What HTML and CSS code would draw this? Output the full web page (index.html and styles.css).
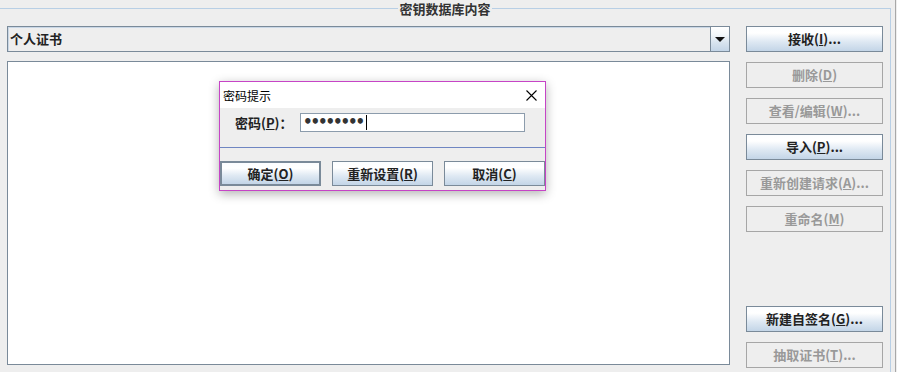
FILE: index.html
```html
<!DOCTYPE html>
<html lang="zh-CN">
<head>
  <meta charset="UTF-8" />
  <title>密钥数据库内容</title>
  <link rel="stylesheet" href="styles.css">
</head>
<body>
  <div class="frame">
    <fieldset class="group">
      <legend>密钥数据库内容</legend>
      <div class="content">
        <div class="main">
          <div class="combo">
            <span class="combo-text">个人证书</span>
            <span class="combo-arrow"><span class="tri"></span></span>
          </div>
          <div class="list"></div>
        </div>
        <div class="actions">
          <button class="btn">接收(<u>I</u>)...</button>
          <button class="btn" disabled>删除(<u>D</u>)</button>
          <button class="btn" disabled>查看/编辑(<u>W</u>)...</button>
          <button class="btn">导入(<u>P</u>)...</button>
          <button class="btn" disabled>重新创建请求(<u>A</u>)...</button>
          <button class="btn" disabled>重命名(<u>M</u>)</button>
          <button class="btn push-down">新建自签名(<u>G</u>)...</button>
          <button class="btn" disabled>抽取证书(<u>T</u>)...</button>
        </div>
      </div>
    </fieldset>

    <div class="dialog">
      <div class="dlg-title">
        <span>密码提示</span>
        <svg class="close" width="11" height="11" viewBox="0 0 11 11">
          <path d="M0.5 0.5 L10.5 10.5 M10.5 0.5 L0.5 10.5" stroke="#000" stroke-width="1.1" fill="none"/>
        </svg>
      </div>
      <div class="dlg-body">
        <div class="pw-row">
          <label class="pw-label">密码(<u>P</u>)：</label>
          <div class="field"><span class="dots">••••••••</span><span class="caret"></span></div>
        </div>
      </div>
      <div class="separator"></div>
      <div class="dlg-buttons">
        <button class="btn default">确定(<u>O</u>)</button>
        <button class="btn">重新设置(<u>R</u>)</button>
        <button class="btn">取消(<u>C</u>)</button>
      </div>
    </div>
  </div>
</body>
</html>
```

FILE: styles.css
```css
body {
  margin: 0;
  background-color: #eeeeee;
  font-family: "Noto Sans CJK SC", "DejaVu Sans", sans-serif;
  font-size: 13px;
  color: #222;
  overflow: hidden;
}

.frame {
  position: relative;
  width: 895px;
  height: 372px;
  border-right: 1px solid #a8a8a8;
  overflow: hidden;
}

.group {
  margin: 0;
  padding: 9px 7px 0 7px;
  width: 891px;
  height: 372px;
  box-sizing: border-box;
  border: 1px solid #b8cfe5;
  border-left: none;
  border-bottom: none;
  min-width: 0;
}

.group legend {
  margin: 0 auto;
  padding: 0 1px;
  font-weight: bold;
  font-size: 13px;
  line-height: 17px;
  color: #333;
}

.content {
  display: flex;
  gap: 16px;
  height: 342px;
}

.main {
  width: 723px;
  display: flex;
  flex-direction: column;
  gap: 9px;
}

.combo {
  height: 26px;
  box-sizing: border-box;
  border: 1px solid #7a8a99;
  display: flex;
  box-shadow: inset 1px 1px 0 #c9d7e6;
}

.combo-text {
  flex: 1;
  padding-left: 2px;
  line-height: 24px;
  font-weight: bold;
  color: #222;
}

.combo-arrow {
  width: 18px;
  border-left: 1px solid #7a8a99;
  background: linear-gradient(#ffffff 0%, #f4f8fb 30%, #d8e4ef 65%, #c3d5e7 100%);
  display: flex;
  align-items: center;
  justify-content: center;
}

.tri {
  width: 0;
  height: 0;
  border-left: 5px solid transparent;
  border-right: 5px solid transparent;
  border-top: 5px solid #111;
}

.list {
  height: 304px;
  box-sizing: border-box;
  background-color: #ffffff;
  border: 1px solid #7a8a99;
}

.actions {
  width: 137px;
  display: flex;
  flex-direction: column;
  gap: 10px;
}

.btn {
  height: 26px;
  box-sizing: border-box;
  padding: 0;
  border: 1px solid #7a8a99;
  background: linear-gradient(#fbfdff 0%, #ffffff 25%, #dfe9f3 60%, #c3d5e7 100%);
  font-family: "Noto Sans CJK SC", "DejaVu Sans", sans-serif;
  font-size: 13px;
  font-weight: bold;
  color: #222;
  line-height: 24px;
}

.btn:disabled {
  border-color: #a6a6a6;
  background: #eeeeee;
  color: #999999;
}

.btn u {
  text-underline-offset: 1px;
}

.push-down {
  margin-top: auto;
}

.dialog {
  position: absolute;
  left: 219px;
  top: 81px;
  width: 327px;
  height: 110px;
  box-sizing: border-box;
  border: 1px solid #c644c6;
  background-color: #eeeeee;
  box-shadow: 0 3px 10px rgba(0, 0, 0, 0.3);
}

.dlg-title {
  height: 26px;
  background-color: #ffffff;
  display: flex;
  align-items: center;
  justify-content: space-between;
  padding: 0 8px 0 3px;
  font-size: 12px;
  color: #000;
}

.dlg-body {
  padding: 5px 0 0 15px;
}

.pw-row {
  display: flex;
  align-items: center;
}

.pw-label {
  width: 65px;
  font-weight: bold;
  color: #222;
}

.field {
  width: 225px;
  height: 19px;
  box-sizing: border-box;
  border: 1px solid #8c9cac;
  background-color: #ffffff;
  display: flex;
  align-items: center;
  padding-left: 2px;
}

.dots {
  font-family: "DejaVu Sans", sans-serif;
  font-size: 15px;
  font-weight: bold;
  letter-spacing: -2.1px;
  color: #333;
  line-height: 15px;
}

.caret {
  width: 1px;
  height: 15px;
  margin-left: 3px;
  background-color: #000;
}

.separator {
  height: 1px;
  margin-top: 15px;
  background-color: #6f86c2;
}

.dlg-buttons {
  display: flex;
  gap: 11px;
  margin-top: 13px;
}

.dlg-buttons .btn {
  width: 101px;
  height: 25px;
  line-height: 23px;
}

.dlg-buttons .default {
  border: 2px solid #7a8a99;
  line-height: 21px;
}
```
